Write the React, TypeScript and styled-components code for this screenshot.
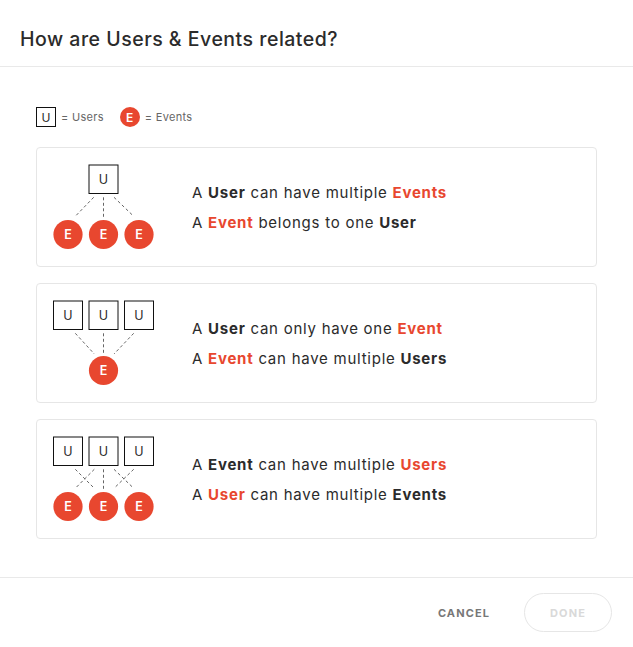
import styled, { createGlobalStyle } from "styled-components";

const RED = "#e8472f";
const INK = "#2b2b2b";

const GlobalStyle = createGlobalStyle`
  html, body {
    margin: 0;
    padding: 0;
    background: #fff;
  }
  body {
    font-family: Inter, "Open Sans", "Liberation Sans", sans-serif;
    color: ${INK};
  }
`;

const Modal = styled.div`
  width: 633px;
  height: 647px;
  display: flex;
  flex-direction: column;
  background: #fff;
`;

const Header = styled.div`
  height: 67px;
  display: flex;
  align-items: center;
  padding: 11px 20px 0;
  box-sizing: border-box;
  border-bottom: 1px solid #e9e9e9;
`;

const Title = styled.h2`
  margin: 0;
  font-size: 19.5px;
  font-weight: 500;
  color: ${INK};
  letter-spacing: 0.5px;
`;

const Body = styled.div`
  flex: 1;
  padding: 40px 36px 0 36px;
  display: flex;
  flex-direction: column;
`;

const Legend = styled.div`
  display: flex;
  align-items: center;
  height: 20px;
  margin-bottom: 20px;
  font-size: 11px;
  letter-spacing: 0.3px;
  color: #666;
`;

const LegendItem = styled.div`
  display: flex;
  align-items: center;
  gap: 5px;
  margin-right: 16px;
`;

const UserBox = styled.span`
  width: 20px;
  height: 20px;
  box-sizing: border-box;
  border: 1px solid #111;
  display: flex;
  align-items: center;
  justify-content: center;
  font-size: 12px;
  color: ${INK};
`;

const EventDot = styled.span`
  width: 20px;
  height: 20px;
  border-radius: 50%;
  background: ${RED};
  color: #fff;
  font-weight: 600;
  display: flex;
  align-items: center;
  justify-content: center;
  font-size: 12px;
`;

const Cards = styled.div`
  display: flex;
  flex-direction: column;
  gap: 16px;
`;

const Card = styled.div`
  display: flex;
  align-items: center;
  gap: 38px;
  padding: 16px;
  border: 1px solid #e6e6e6;
  border-radius: 4px;
`;

const Lines = styled.div`
  display: flex;
  flex-direction: column;
  gap: 11px;
  font-size: 15px;
  color: ${INK};
  letter-spacing: 0.75px;
`;

const Strong = styled.b<{ $red?: boolean }>`
  font-weight: 700;
  color: ${(p) => (p.$red ? RED : INK)};
`;

const Footer = styled.div`
  height: 69px;
  border-top: 1px solid #e9e9e9;
  display: flex;
  align-items: center;
  justify-content: flex-end;
  gap: 34px;
  padding: 0 21px 0 0;
`;

const TextButton = styled.button`
  background: none;
  border: none;
  padding: 0;
  font-family: inherit;
  font-size: 11px;
  font-weight: 700;
  letter-spacing: 1.1px;
  color: #777;
  cursor: pointer;
`;

const PillButton = styled.button`
  width: 88px;
  height: 39px;
  border: 1px solid #e6e6e6;
  border-radius: 20px;
  background: #fff;
  font-family: inherit;
  font-size: 11px;
  font-weight: 700;
  letter-spacing: 1.1px;
  color: #d9d9d9;
`;

type Kind = "one-many" | "many-one" | "many-many";

const xs = [15, 50.5, 86];

const Box = ({ x }: { x: number }) => (
  <g>
    <rect x={x - 14.5} y={1} width={29} height={28.5} fill="#fff" stroke="#111" strokeWidth={1} />
    <text x={x} y={19.5} textAnchor="middle" fontSize={12.5} fill={INK}>U</text>
  </g>
);

const Dot = ({ x }: { x: number }) => (
  <g>
    <circle cx={x} cy={70.5} r={14.6} fill={RED} />
    <text x={x} y={75} textAnchor="middle" fontSize={12.5} fontWeight={600} fill="#fff">E</text>
  </g>
);

const Dash = ({ x1, y1, x2, y2 }: { x1: number; y1: number; x2: number; y2: number }) => (
  <line x1={x1} y1={y1} x2={x2} y2={y2} stroke="#666" strokeWidth={1} strokeDasharray="3 2.5" />
);

const Diagram = ({ kind }: { kind: Kind }) => (
  <svg width={101} height={86} viewBox="0 0 101 86">
    {kind === "one-many" && (
      <>
        <Dash x1={40.7} y1={33.3} x2={22.3} y2={52.3} />
        <Dash x1={50.5} y1={33.3} x2={50.5} y2={54} />
        <Dash x1={61} y1={33.3} x2={80.7} y2={52.3} />
        <Box x={50.5} />
        {xs.map((x) => <Dot key={x} x={x} />)}
      </>
    )}
    {kind === "many-one" && (
      <>
        <Dash x1={22.3} y1={33.3} x2={41.3} y2={54} />
        <Dash x1={50.5} y1={33.3} x2={50.5} y2={54} />
        <Dash x1={80.7} y1={33.3} x2={61} y2={54} />
        {xs.map((x) => <Box key={x} x={x} />)}
        <Dot x={50.5} />
      </>
    )}
    {kind === "many-many" && (
      <>
        <Dash x1={22.3} y1={33.3} x2={41.3} y2={52.3} />
        <Dash x1={41.3} y1={33.3} x2={22.3} y2={52.3} />
        <Dash x1={50.5} y1={33.3} x2={50.5} y2={54} />
        <Dash x1={61} y1={33.3} x2={80.7} y2={52.3} />
        <Dash x1={80.7} y1={33.3} x2={61} y2={52.3} />
        {xs.map((x) => <Box key={x} x={x} />)}
        {xs.map((x) => <Dot key={"e" + x} x={x} />)}
      </>
    )}
  </svg>
);

export default function App() {
  return (
    <Modal>
      <GlobalStyle />
      <Header>
        <Title>How are Users &amp; Events related?</Title>
      </Header>
      <Body>
        <Legend>
          <LegendItem>
            <UserBox>U</UserBox> = Users
          </LegendItem>
          <LegendItem>
            <EventDot>E</EventDot> = Events
          </LegendItem>
        </Legend>
        <Cards>
          <Card>
            <Diagram kind="one-many" />
            <Lines>
              <span>A <Strong>User</Strong> can have multiple <Strong $red>Events</Strong></span>
              <span>A <Strong $red>Event</Strong> belongs to one <Strong>User</Strong></span>
            </Lines>
          </Card>
          <Card>
            <Diagram kind="many-one" />
            <Lines>
              <span>A <Strong>User</Strong> can only have one <Strong $red>Event</Strong></span>
              <span>A <Strong $red>Event</Strong> can have multiple <Strong>Users</Strong></span>
            </Lines>
          </Card>
          <Card>
            <Diagram kind="many-many" />
            <Lines>
              <span>A <Strong>Event</Strong> can have multiple <Strong $red>Users</Strong></span>
              <span>A <Strong $red>User</Strong> can have multiple <Strong>Events</Strong></span>
            </Lines>
          </Card>
        </Cards>
      </Body>
      <Footer>
        <TextButton>CANCEL</TextButton>
        <PillButton disabled>DONE</PillButton>
      </Footer>
    </Modal>
  );
}
